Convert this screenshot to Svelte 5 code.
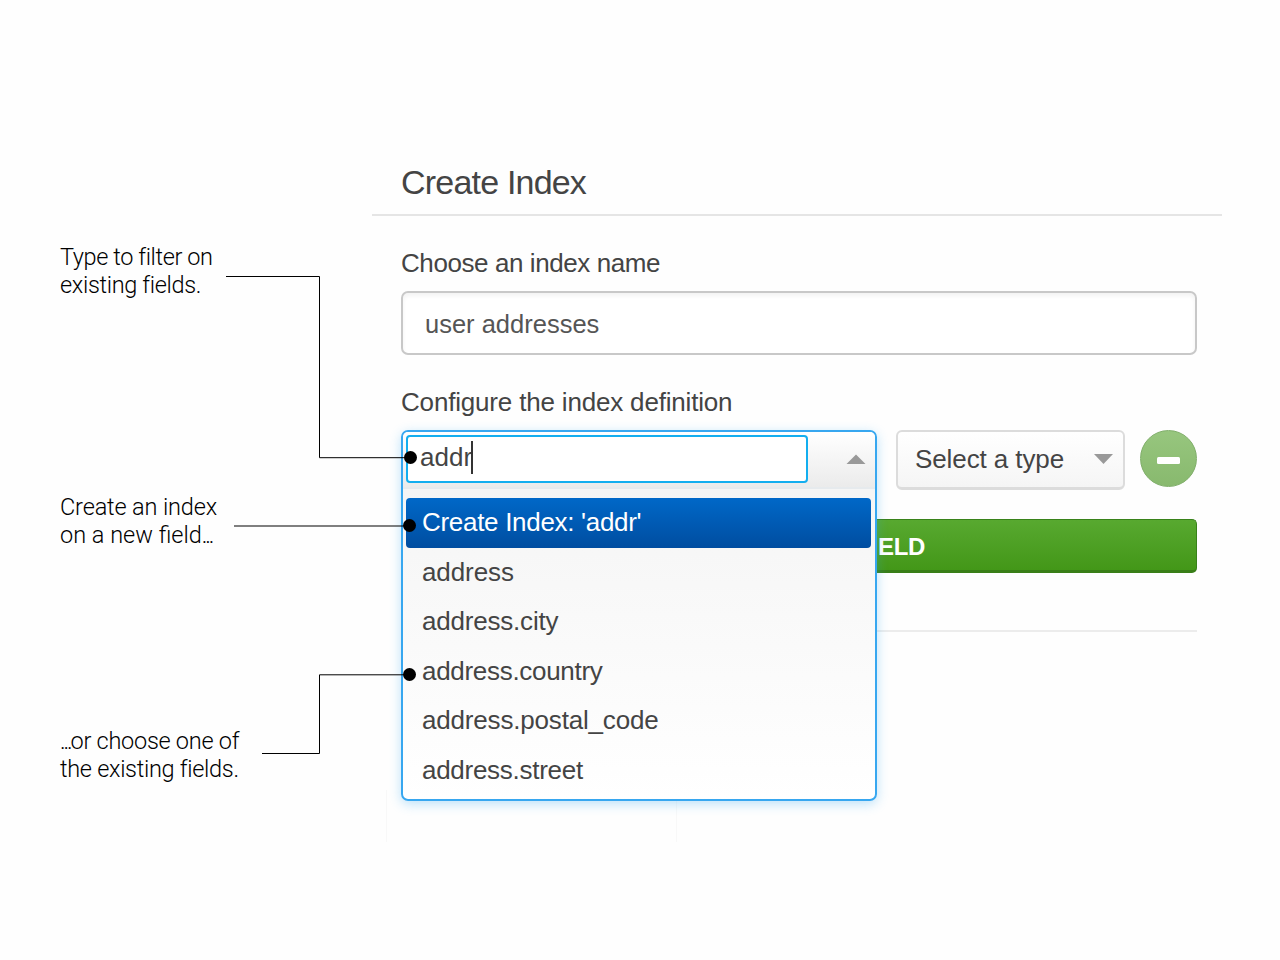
<script>
  const fields = [
    { name: 'address', spacing: -0.1 },
    { name: 'address.city', spacing: -0.2 },
    { name: 'address.country', spacing: -0.3 },
    { name: 'address.postal_code', spacing: -0.18 },
    { name: 'address.street', spacing: -0.28 }
  ];
</script>

<main>
  <aside>
    <p class="note first"><span class="n1">Type to filter on</span><br /><span class="n2">existing fields.</span></p>
    <p class="note second"><span class="n3">Create an index</span><br /><span class="n4">on a new field<span class="dots">...</span></span></p>
    <p class="note third"><span class="n5"><span class="dots">...</span>or choose one of</span><br /><span class="n6">the existing fields.</span></p>
  </aside>

  <section class="panel">
    <header><h1>Create Index</h1></header>
    <div class="body">
      <div class="label name-label">Choose an index name</div>
      <div class="name"><span>user addresses</span></div>
      <div class="label def-label">Configure the index definition</div>
      <div class="row">
        <div class="combo">
          <div class="drop">
            <div class="head">
              <div class="search"><span>addr</span><i></i></div>
              <svg class="arrow" width="20" height="10" viewBox="0 0 20 10"><path d="M0.5 10 10 0.5 19.5 10z" fill="#999" /></svg>
            </div>
            <ul>
              <li class="active">Create Index: 'addr'</li>
              {#each fields as f}
                <li style="letter-spacing: {f.spacing}px">{f.name}</li>
              {/each}
            </ul>
          </div>
        </div>
        <div class="type">
          <span>Select a type</span>
          <svg width="19" height="10" viewBox="0 0 19 10"><path d="M0 0H19L9.5 10z" fill="#999" /></svg>
        </div>
        <div class="minus"><b></b></div>
      </div>
      <div class="add"><span>ELD</span></div>
      <hr />
      <div class="ticks"></div>
    </div>
  </section>

  <svg class="lines" width="1280" height="960" viewBox="0 0 1280 960" fill="none" stroke="#000">
    <path d="M226 276.5H319.5V457.7H410" />
    <path d="M234 526H410" />
    <path d="M262 753.5H319.5V674.8H410" />
    <g fill="#000" stroke="none">
      <circle cx="410.5" cy="457.5" r="6.5" />
      <circle cx="409.5" cy="525.5" r="6.5" />
      <circle cx="409.5" cy="674.5" r="6.5" />
    </g>
  </svg>
</main>

<style>
  :global(body) { margin: 0; background: #fefefe; }
  * { box-sizing: border-box; }
  main {
    position: relative;
    display: flex;
    width: 1280px;
    height: 960px;
    overflow: hidden;
    background: #fefefe;
    color: #444;
    font-family: "Liberation Sans", Arial, sans-serif;
    white-space: nowrap;
  }
  aside { width: 372px; padding: 243px 0 0 60px; }
  .note {
    margin: 0;
    height: 56px;
    font: 300 23.5px/28px Roboto, sans-serif;
    color: #000;
  }
  .n1 { letter-spacing: -0.4px; }
  .n2 { letter-spacing: -0.33px; }
  .n3 { letter-spacing: -0.15px; }
  .n4 { letter-spacing: 0; }
  .n5 { letter-spacing: -0.27px; }
  .n6 { letter-spacing: -0.3px; }
  .dots { letter-spacing: -2.1px; }
  .second { margin-top: 194px; }
  .third { margin-top: 178px; }
  .panel { width: 850px; }
  header { height: 216px; padding: 163px 0 0 29px; border-bottom: 2px solid #e5e5e5; }
  h1 { margin: 0; font-size: 34px; line-height: 38px; font-weight: 400; letter-spacing: -0.8px; }
  .body { padding: 0 25px 0 29px; }
  .label { font-size: 26px; line-height: 30px; }
  .name-label { margin-top: 32px; letter-spacing: -0.42px; }
  .name {
    height: 64px;
    margin-top: 13px;
    padding: 16px 22px;
    border: 2px solid #c8c8c8;
    border-radius: 7px;
    background: #fff;
    box-shadow: inset 0 3px 4px #0000000d;
    font-size: 25.5px;
    line-height: 30px;
    color: #555;
  }
  .def-label { margin-top: 32px; letter-spacing: -0.18px; }
  .row { display: flex; margin-top: 13px; height: 60px; }
  .combo { position: relative; width: 476px; margin-right: 19px; }
  .drop {
    position: absolute;
    inset: 0 0 auto 0;
    height: 371px;
    border: 2px solid #37a7f0;
    border-radius: 7px;
    background: linear-gradient(#f5f5f5 60px, #fff 368px);
    box-shadow: 0 3px 12px #37a7f055;
    overflow: hidden;
  }
  .head {
    display: flex;
    align-items: flex-start;
    height: 57px;
    padding: 3px;
    border-bottom: 2px solid #e6eaed;
    background: linear-gradient(#fff, #ebebeb);
  }
  .search {
    display: flex;
    width: 402px;
    height: 48px;
    padding: 4px 0 0 12px;
    border: 2px solid #13aeef;
    border-radius: 4px;
    background: #fff;
    font-size: 26px;
    line-height: 32px;
  }
  .search i { width: 2px; height: 33px; margin-left: -1px; background: #333; }
  .arrow { margin: 19px 0 0 38px; }
  ul { list-style: none; margin: 0; padding: 9px 4px 9px 3px; }
  li { height: 49.5px; padding-left: 16px; font-size: 26px; line-height: 49px; border-radius: 4px; }
  .active { color: #fff; background: linear-gradient(#0068c8, #004da0); letter-spacing: -0.3px; }
  .type {
    display: flex;
    align-items: center;
    width: 229px;
    height: 60px;
    padding: 0 10px 0 17px;
    justify-content: space-between;
    border: 2px solid #dcdcdc;
    border-bottom-width: 3px;
    border-radius: 6px;
    background: linear-gradient(#fff, #f5f5f5);
    font-size: 26px;
    letter-spacing: -0.1px;
  }
  .type svg { margin-top: -1px; }
  .minus {
    display: flex;
    align-items: center;
    justify-content: center;
    width: 57px;
    height: 57px;
    margin-left: 15px;
    border: 1.5px solid #7fae69;
    border-radius: 50%;
    background: linear-gradient(#97c67e, #88b96e);
  }
  .minus b { width: 23px; height: 7px; margin-top: 4px; border-radius: 1.5px; background: #fff; }
  .add {
    height: 54px;
    margin-top: 29px;
    padding-left: 476px;
    border: 1.5px solid #38821a;
    border-bottom: 3px solid #397e18;
    border-radius: 5px;
    background: linear-gradient(#58a930, #439718);
    color: #fff;
    font-size: 24px;
    font-weight: 700;
    line-height: 54px;
    letter-spacing: -0.3px;
  }
  hr { margin: 57px 0 0; border: 0; height: 2px; background: #ececec; }
  .ticks { width: 291px; height: 52px; margin: 158px 0 0 -15px; border: solid #f8f8f8; border-width: 0 1px; }
  .lines { position: absolute; inset: 0; }
</style>
